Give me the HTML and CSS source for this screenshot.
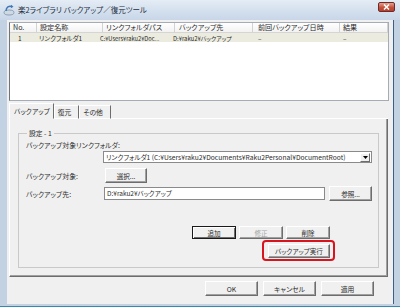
FILE: index.html
```html
<!DOCTYPE html>
<html lang="ja">
<head>
    <meta charset="UTF-8">
    <title>楽2ライブラリ バックアップ／復元ツール</title>
    <link rel="stylesheet" href="styles.css">
</head>
<body>
    <div class="window">
        <div class="titlebar">
            <svg class="app-icon" width="12" height="12" viewBox="0 0 12 12">
                <ellipse cx="6" cy="8.5" rx="5" ry="2.5" fill="#cfd9e4" stroke="#7d8fa3" stroke-width="0.8"/>
                <path d="M3 7 C3 3 6 1.5 9 2.5" fill="none" stroke="#3f78b5" stroke-width="1.4"/>
                <path d="M8 0.8 L10.5 2.7 L7.8 4.2 Z" fill="#3f78b5"/>
            </svg>
            <span class="title">楽2ライブラリ バックアップ／復元ツール</span>
            <div class="close-btn">
                <svg width="7" height="6" viewBox="0 0 7 6">
                    <path d="M1 0.5 L6 5.5 M6 0.5 L1 5.5" stroke="#fff" stroke-width="1.5"/>
                </svg>
            </div>
        </div>

        <div class="client">
            <div class="listview">
                <div class="lv-row lv-head">
                    <span class="c-no">No.</span>
                    <span class="c-name">設定名称</span>
                    <span class="c-link">リンクフォルダパス</span>
                    <span class="c-dest">バックアップ先</span>
                    <span class="c-date">前回バックアップ日時</span>
                    <span class="c-result">結果</span>
                </div>
                <div class="lv-row lv-item">
                    <span class="c-no">1</span>
                    <span class="c-name">リンクフォルダ1</span>
                    <span class="c-link">C:¥Users¥raku2¥Doc...</span>
                    <span class="c-dest">D:¥raku2¥バックアップ</span>
                    <span class="c-date">–</span>
                    <span class="c-result">–</span>
                </div>
            </div>

            <div class="tabs">
                <div class="tab active">バックアップ</div>
                <div class="tab">復元</div>
                <div class="tab">その他</div>
                <div class="tab-rest"></div>
            </div>

            <div class="tab-panel">
                <fieldset class="group">
                    <legend>設定 - 1</legend>

                    <div class="field-label">バックアップ対象リンクフォルダ:</div>
                    <div class="combo">
                        <span class="combo-text">リンクフォルダ1 (C:¥Users¥raku2¥Documents¥Raku2Personal¥DocumentRoot)</span>
                        <span class="combo-arrow">
                            <svg width="5" height="3" viewBox="0 0 5 3"><path d="M0 0 H5 L2.5 3 Z" fill="#000"/></svg>
                        </span>
                    </div>

                    <div class="form-row">
                        <span class="row-label">バックアップ対象:</span>
                        <button class="btn btn-select">選択...</button>
                    </div>

                    <div class="form-row">
                        <span class="row-label">バックアップ先:</span>
                        <div class="text-input">D:¥raku2¥バックアップ</div>
                        <button class="btn btn-browse">参照...</button>
                    </div>

                    <div class="action-row">
                        <button class="btn btn-default">追加</button>
                        <button class="btn" disabled>修正</button>
                        <button class="btn">削除</button>
                    </div>

                    <div class="exec-row">
                        <div class="highlight">
                            <button class="btn btn-exec">バックアップ実行</button>
                        </div>
                    </div>
                </fieldset>
            </div>

            <div class="dialog-buttons">
                <button class="btn btn-dialog">OK</button>
                <button class="btn btn-dialog">キャンセル</button>
                <button class="btn btn-dialog">適用</button>
            </div>
        </div>
    </div>
</body>
</html>
```

FILE: styles.css
```css
* {
    box-sizing: border-box;
}
body {
    margin: 0;
    font-family: 'Noto Sans CJK JP', 'Noto Sans', sans-serif;
    font-size: 7px;
    font-feature-settings: "palt";
    color: #2b2b2b;
}
.window {
    width: 400px;
    height: 307px;
    background: #c3d2e3;
    display: flex;
    flex-direction: column;
    border-bottom: 1px solid #3a86ad;
}
.titlebar {
    height: 20px;
    display: flex;
    align-items: center;
    padding: 0 5px 0 3px;
    background: linear-gradient(#e4ecf5, #c7d6e8);
}
.app-icon {
    margin-right: 3px;
}
.title {
    font-size: 7.5px;
    color: #1e2e40;
    margin-top: -1px;
}
.close-btn {
    margin-left: auto;
    width: 17px;
    height: 10px;
    margin-top: -7px;
    border: 1px solid #6d2a2a;
    border-radius: 2px;
    background: linear-gradient(#e3a291, #c4523d 55%, #b8402c);
    display: flex;
    align-items: center;
    justify-content: center;
}
.client {
    flex: 1;
    margin: 0 6px 2px 7px;
    background: #f0f0f0;
    border-right: 1px solid #3b5f86;
    padding: 2px 2px 0 2px;
    display: flex;
    flex-direction: column;
}

/* list view */
.listview {
    height: 79px;
    background: #fff;
    border: 1px solid #a5acb5;
    border-left-color: #6e747c;
    margin-right: 2px;
}
.lv-row {
    display: grid;
    grid-template-columns: 27px 66px 72px 78px 87px 1fr;
    align-items: center;
}
.lv-head {
    height: 10px;
    background: linear-gradient(#fff, #f2f2f2);
    border-bottom: 1px solid #d5d5d5;
    font-size: 7.1px;
}
.lv-head span {
    border-right: 1px solid #d2d2d2;
    padding-left: 3px;
    line-height: 9px;
    white-space: nowrap;
}
.lv-head .c-dest {
    padding-left: 4px;
}
.lv-head .c-date {
    padding-left: 5px;
}
.lv-item {
    height: 9px;
    background: #ecebdf;
    font-size: 6.5px;
}
.lv-item span {
    white-space: nowrap;
}
.lv-item .c-no {
    padding-left: 8px;
}
.lv-item .c-name {
    padding-left: 2px;
}
.lv-item .c-link {
    margin-left: -3px;
    font-size: 5.7px;
}
.lv-item .c-dest {
    margin-left: -2px;
    font-size: 5.9px;
}
.lv-item .c-date {
    padding-left: 5px;
}
.lv-item .c-result {
    padding-left: 3px;
}

/* tabs */
.tabs {
    display: flex;
    align-items: flex-end;
    height: 17px;
    margin-top: 1px;
}
.tab {
    height: 14px;
    padding: 0 3px;
    display: flex;
    align-items: center;
    border-top: 1px solid #fff;
    border-left: 1px solid #fff;
    border-right: 1px solid #6d6d6d;
    border-bottom: 1px solid #fff;
    font-size: 6.8px;
}
.tab.active {
    height: 16px;
    padding: 0 3px 0 4px;
    border-bottom-color: #f0f0f0;
}
.tab + .tab {
    padding-right: 7px;
}
.tab-rest {
    flex: 1;
    border-bottom: 1px solid #fff;
    margin-right: 3px;
}
.tab-panel {
    height: 158px;
    margin-right: 3px;
    border-left: 1px solid #fff;
    border-right: 1px solid #6d6d6d;
    border-bottom: 1px solid #6d6d6d;
    box-shadow: inset -1px -1px #a0a0a0;
    padding: 10px 8px 0 8px;
}

/* group box */
.group {
    margin: 0;
    height: 139px;
    border: 1px solid #c9c9c9;
    padding: 0 6px 0 7px;
    display: flex;
    flex-direction: column;
}
.group legend {
    padding: 0 2px;
    margin-left: 1px;
    font-size: 6.8px;
    line-height: 8px;
}
.field-label {
    margin-top: 4px;
    line-height: 8px;
    font-size: 6.9px;
}
.combo {
    margin: 2px 0 0 77px;
    height: 12px;
    background: #fff;
    border: 1px solid #8a8a8a;
    display: flex;
    align-items: center;
    padding-left: 2px;
}
.combo-text {
    flex: 1;
    font-size: 6.7px;
    white-space: nowrap;
    overflow: hidden;
}
.combo-arrow {
    width: 10px;
    height: 9px;
    margin-right: 1px;
    background: #f0f0f0;
    border: 1px solid;
    border-color: #fff #6d6d6d #6d6d6d #fff;
    display: flex;
    align-items: center;
    justify-content: center;
}
.form-row {
    display: flex;
    align-items: center;
    height: 15px;
    margin-top: 5px;
}
.form-row + .form-row {
    margin-top: 3px;
}
.row-label {
    width: 79px;
    font-size: 6.9px;
}
.text-input {
    flex: 1;
    height: 13px;
    background: #fff;
    border: 1px solid #8a8a8a;
    padding-left: 2px;
    line-height: 11px;
    font-size: 6.5px;
    margin-left: -1px;
}

/* buttons */
.btn {
    font-family: inherit;
    font-feature-settings: "palt";
    font-size: 6.6px;
    color: #2b2b2b;
    background: #f0f0f0;
    border: 1px solid;
    border-color: #fff #6d6d6d #6d6d6d #fff;
    box-shadow: inset -1px -1px #a0a0a0;
    padding: 0;
    margin: 0;
    height: 13px;
    line-height: 10px;
}
.btn:disabled {
    color: #a6a6a6;
}
.btn-select {
    width: 42px;
    height: 15px;
}
.btn-browse {
    width: 43px;
    height: 15px;
    margin-left: 4px;
}
.action-row {
    display: flex;
    gap: 3px;
    margin-top: 25px;
    padding-left: 166px;
}
.action-row .btn {
    width: 44px;
}
.btn-default {
    border: 1px solid #1a1a1a;
    box-shadow: inset 1px 1px #fff, inset -1px -1px #6d6d6d;
}
.exec-row {
    margin-top: 1px;
    padding-left: 236px;
}
.highlight {
    width: 73px;
    height: 21px;
    border: 2px solid #d8141e;
    border-radius: 4px;
    padding: 2px 0 0 4px;
}
.btn-exec {
    width: 62px;
    height: 14px;
}
.dialog-buttons {
    display: flex;
    justify-content: flex-end;
    gap: 5px;
    margin-top: 4px;
    padding-right: 17px;
}
.btn-dialog {
    width: 53px;
    height: 15px;
    font-size: 6.8px;
}
```
